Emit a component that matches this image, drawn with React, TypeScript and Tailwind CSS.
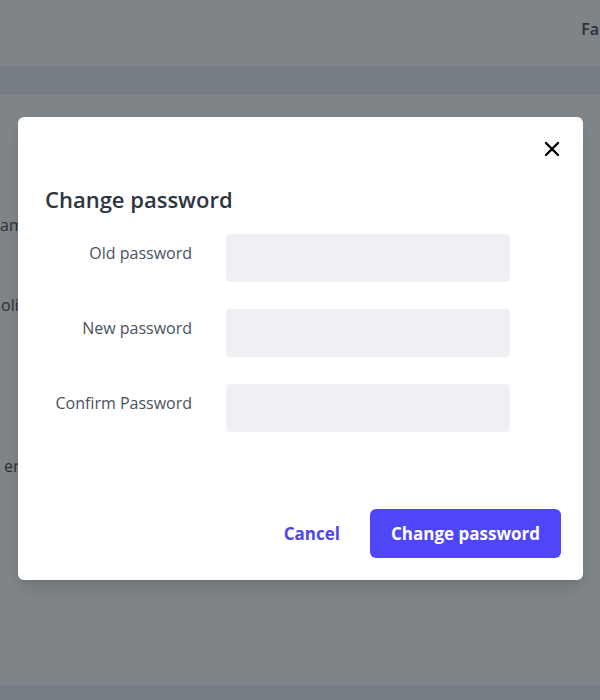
import { X } from "lucide-react"

const fields = ["Old password", "New password", "Confirm Password"]

export default function App() {
  return (
    <div className="relative h-[700px] w-[600px] overflow-hidden bg-[#7e8487] font-['Open_Sans',sans-serif]">
      {/* page under the overlay */}
      <header className="flex h-[68px] items-center justify-end border-b border-[#767c80]">
        <span className="-mt-[10px] pr-[1px] text-[16px] font-semibold text-[#2b3036]">Fa</span>
      </header>
      <div className="h-[27px] bg-[#777d84]" />
      <div className="flex h-[590px] flex-col items-start text-[16px] text-[#2b3036]">
        <span className="mt-[118px]">am</span>
        <span className="ml-[1px] mt-[56px]">oli</span>
        <span className="ml-[4px] mt-[137px]">er</span>
      </div>
      <div className="h-[15px] bg-[#777d84]" />

      {/* modal */}
      <div className="absolute left-[18px] top-[117px] w-[565px] rounded-md bg-white px-[27px] pb-[22px] pt-[20px] shadow-lg">
        <div className="flex justify-end">
          <button className="-mr-[8px] text-black">
            <X size={24} strokeWidth={2.4} />
          </button>
        </div>
        <h2 className="mt-[24px] text-[22px] font-semibold leading-7 text-[#2d3541]">Change password</h2>
        <div className="mt-[21px] flex flex-col gap-[27px]">
          {fields.map((label) => (
            <div key={label} className="flex items-start">
              <label className="w-[147px] pt-[7px] text-right text-[16px] text-[#4a5260]">{label}</label>
              <input
                type="password"
                className="ml-[34px] h-[48px] w-[284px] rounded bg-[#eff0f4] px-3 outline-none"
              />
            </div>
          ))}
        </div>
        <div className="-mr-[5px] mt-[77px] flex items-center justify-end gap-[30px]">
          <button className="text-[17px] font-bold text-[#5046e9]">Cancel</button>
          <button className="h-[49px] w-[191px] rounded-md bg-[#4f46f8] text-[17px] font-bold text-white">
            Change password
          </button>
        </div>
      </div>
    </div>
  )
}
